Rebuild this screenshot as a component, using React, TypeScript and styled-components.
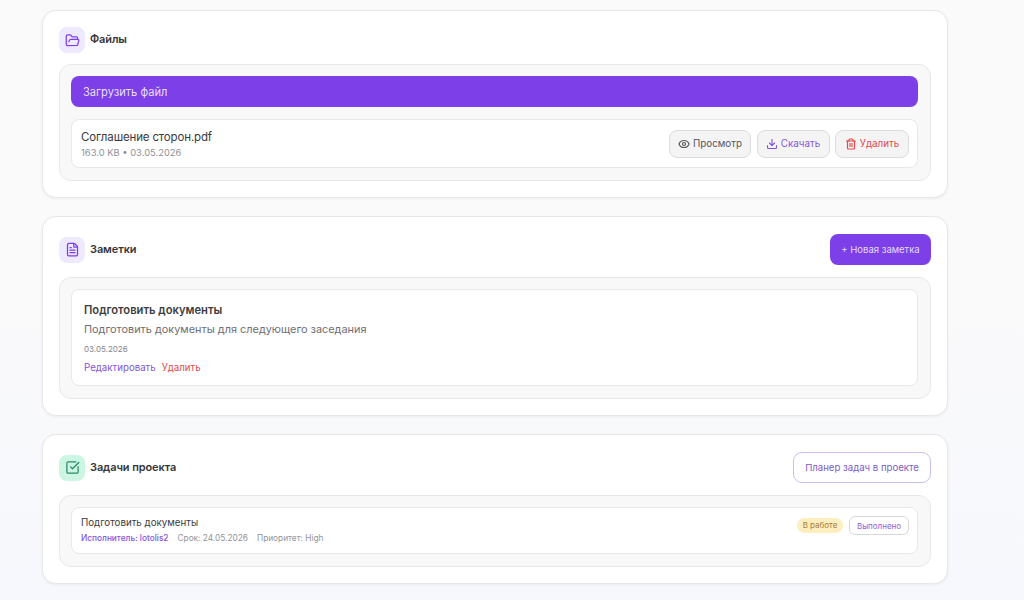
import React from 'react';
import styled, { createGlobalStyle } from 'styled-components';
import { Download, Eye, FileText, FolderOpen, SquareCheckBig, Trash2 } from 'lucide-react';

const GlobalStyle = createGlobalStyle`
  html, body {
    margin: 0;
    padding: 0;
    height: 100%;
    overflow: hidden;
  }
  body {
    background: linear-gradient(180deg, #fafafa 0%, #fafafa 40%, #f7f8fd 100%);
    font-family: Inter, "Noto Sans", sans-serif;
    color: #2f2f33;
  }
`;

const Page = styled.div`
  display: flex;
  flex-direction: column;
  gap: 18px;
  width: 906px;
  margin-left: 42px;
  padding-top: 10px;
`;

const Card = styled.section`
  box-sizing: border-box;
  display: flex;
  flex-direction: column;
  gap: 11px;
  padding: 16px;
  background: #fff;
  border: 1px solid #e8e8ea;
  border-radius: 14px;
  box-shadow: 0 1px 3px rgba(0, 0, 0, 0.06);
`;

const CardHeader = styled.header`
  display: flex;
  align-items: center;
  justify-content: space-between;
  min-height: 26px;
`;

const HeaderTitle = styled.div`
  display: flex;
  align-items: center;
  gap: 5px;
`;

const IconTile = styled.span<{ $tone: 'violet' | 'green' }>`
  display: flex;
  align-items: center;
  justify-content: center;
  width: 26px;
  height: 26px;
  border-radius: 8px;
  background: ${(p) => (p.$tone === 'green' ? '#ccf6e3' : '#efe9fe')};
  color: ${(p) => (p.$tone === 'green' ? '#2a8a66' : '#7c3fe8')};
`;

const Title = styled.h2`
  margin: 0 0 2px;
  font-size: 11px;
  line-height: 16px;
  font-weight: 600;
  letter-spacing: -0.1px;
  color: #36363a;
`;

const Panel = styled.div`
  display: flex;
  flex-direction: column;
  gap: 12px;
  padding: 11px 12px 12px 11px;
  background: #f8f8f8;
  border: 1px solid #e8e8ea;
  border-radius: 12px;
`;

const UploadBar = styled.button`
  height: 31px;
  padding: 0 12px;
  border: 0;
  border-radius: 8px;
  background: #7c3fe8;
  color: #eadffc;
  font: 400 11.1px Inter, sans-serif;
  text-align: left;
`;

const Row = styled.div`
  box-sizing: border-box;
  display: flex;
  align-items: center;
  justify-content: space-between;
  height: 49px;
  padding: 0 8px 0 9px;
  background: #fff;
  border: 1px solid #e8e8ea;
  border-radius: 8px;
`;

const FileName = styled.div`
  font-size: 11.5px;
  line-height: 16px;
  letter-spacing: -0.15px;
  color: #3a3a3e;
`;

const Muted = styled.div`
  margin-top: 1px;
  font-size: 9.4px;
  line-height: 13px;
  color: #8f8f95;
`;

const Actions = styled.div`
  display: flex;
  gap: 5.5px;
`;

const FileAction = styled.button<{ $color: string; $width: number }>`
  box-sizing: border-box;
  display: flex;
  align-items: center;
  justify-content: center;
  gap: 3px;
  width: ${(p) => p.$width}px;
  height: 28px;
  padding: 0;
  background: #f4f4f5;
  border: 1px solid #dcdce0;
  border-radius: 8px;
  color: ${(p) => p.$color};
  font: 400 9.8px Inter, sans-serif;
`;

const PrimaryButton = styled.button`
  width: 101px;
  height: 31px;
  margin: 1px 0;
  padding: 0;
  border: 0;
  border-radius: 8px;
  background: #7c3fe8;
  color: #e6dafb;
  font: 400 9.5px Inter, sans-serif;
`;

const OutlineButton = styled.button`
  box-sizing: border-box;
  width: 138px;
  height: 31px;
  margin: 1px 0;
  padding: 0;
  background: #fff;
  border: 1px solid #cbbdf2;
  border-radius: 9px;
  color: #7c5bc9;
  font: 400 9.6px Inter, sans-serif;
`;

const Note = styled.article`
  box-sizing: border-box;
  height: 97px;
  padding: 12px;
  background: #fff;
  border: 1px solid #e8e8ea;
  border-radius: 8px;
`;

const NoteTitle = styled.h3`
  margin: 0;
  font-size: 11.2px;
  line-height: 16px;
  font-weight: 600;
  color: #3c3c40;
`;

const NoteBody = styled.p`
  margin: 3px 0 0;
  font-size: 10.9px;
  line-height: 16px;
  color: #6e6e74;
`;

const NoteDate = styled.div`
  margin-top: 6px;
  font-size: 8px;
  line-height: 12px;
  color: #85858b;
`;

const NoteLinks = styled.div`
  display: flex;
  gap: 6px;
  margin-top: 6px;
`;

const TextLink = styled.a<{ $danger?: boolean }>`
  font-size: 9.7px;
  line-height: 14px;
  color: ${(p) => (p.$danger ? '#e5484d' : '#8455dc')};
`;

const TaskRow = styled(Row)`
  height: 47px;
  align-items: flex-start;
`;

const TaskInfo = styled.div`
  padding-top: 8px;
`;

const TaskTitle = styled.div`
  font-size: 9.75px;
  line-height: 14px;
  color: #3a3a3e;
`;

const TaskMeta = styled.div`
  display: flex;
  gap: 9px;
  margin-top: 3px;
  font-size: 8.3px;
  line-height: 11px;
  color: #939399;
`;

const Assignee = styled.span`
  color: #8455dc;
  font-weight: 500;
`;

const TaskSide = styled.div`
  display: flex;
  align-items: center;
  gap: 6px;
  padding-top: 8px;
`;

const Badge = styled.span`
  box-sizing: border-box;
  width: 46px;
  height: 15px;
  border-radius: 8px;
  background: #fdeec0;
  color: #a87a3a;
  font-size: 8px;
  line-height: 15px;
  text-align: center;
`;

const DoneButton = styled.button`
  box-sizing: border-box;
  width: 60px;
  height: 19px;
  padding: 0;
  background: #fff;
  border: 1px solid #d8d8dc;
  border-radius: 6px;
  color: #8a62dc;
  font: 400 8px Inter, sans-serif;
`;

export default function App() {
  return (
    <>
      <GlobalStyle />
      <Page>
        <Card>
          <CardHeader>
            <HeaderTitle>
              <IconTile $tone="violet"><FolderOpen size={15} /></IconTile>
              <Title>Файлы</Title>
            </HeaderTitle>
          </CardHeader>
          <Panel>
            <UploadBar>Загрузить файл</UploadBar>
            <Row>
              <div>
                <FileName>Соглашение сторон.pdf</FileName>
                <Muted>163.0 KB • 03.05.2026</Muted>
              </div>
              <Actions>
                <FileAction $color="#56565c" $width={82}><Eye size={12} strokeWidth={2.4} />Просмотр</FileAction>
                <FileAction $color="#8455dc" $width={73}><Download size={12} strokeWidth={2.2} />Скачать</FileAction>
                <FileAction $color="#e5484d" $width={74}><Trash2 size={12} strokeWidth={2.4} />Удалить</FileAction>
              </Actions>
            </Row>
          </Panel>
        </Card>

        <Card>
          <CardHeader>
            <HeaderTitle>
              <IconTile $tone="violet"><FileText size={15} /></IconTile>
              <Title>Заметки</Title>
            </HeaderTitle>
            <PrimaryButton>+ Новая заметка</PrimaryButton>
          </CardHeader>
          <Panel>
            <Note>
              <NoteTitle>Подготовить документы</NoteTitle>
              <NoteBody>Подготовить документы для следующего заседания</NoteBody>
              <NoteDate>03.05.2026</NoteDate>
              <NoteLinks>
                <TextLink>Редактировать</TextLink>
                <TextLink $danger>Удалить</TextLink>
              </NoteLinks>
            </Note>
          </Panel>
        </Card>

        <Card>
          <CardHeader>
            <HeaderTitle>
              <IconTile $tone="green"><SquareCheckBig size={15} /></IconTile>
              <Title>Задачи проекта</Title>
            </HeaderTitle>
            <OutlineButton>Планер задач в проекте</OutlineButton>
          </CardHeader>
          <Panel>
            <TaskRow>
              <TaskInfo>
                <TaskTitle>Подготовить документы</TaskTitle>
                <TaskMeta>
                  <Assignee>Исполнитель: lotolis2</Assignee>
                  <span>Срок: 24.05.2026</span>
                  <span>Приоритет: High</span>
                </TaskMeta>
              </TaskInfo>
              <TaskSide>
                <Badge>В работе</Badge>
                <DoneButton>Выполнено</DoneButton>
              </TaskSide>
            </TaskRow>
          </Panel>
        </Card>
      </Page>
    </>
  );
}
